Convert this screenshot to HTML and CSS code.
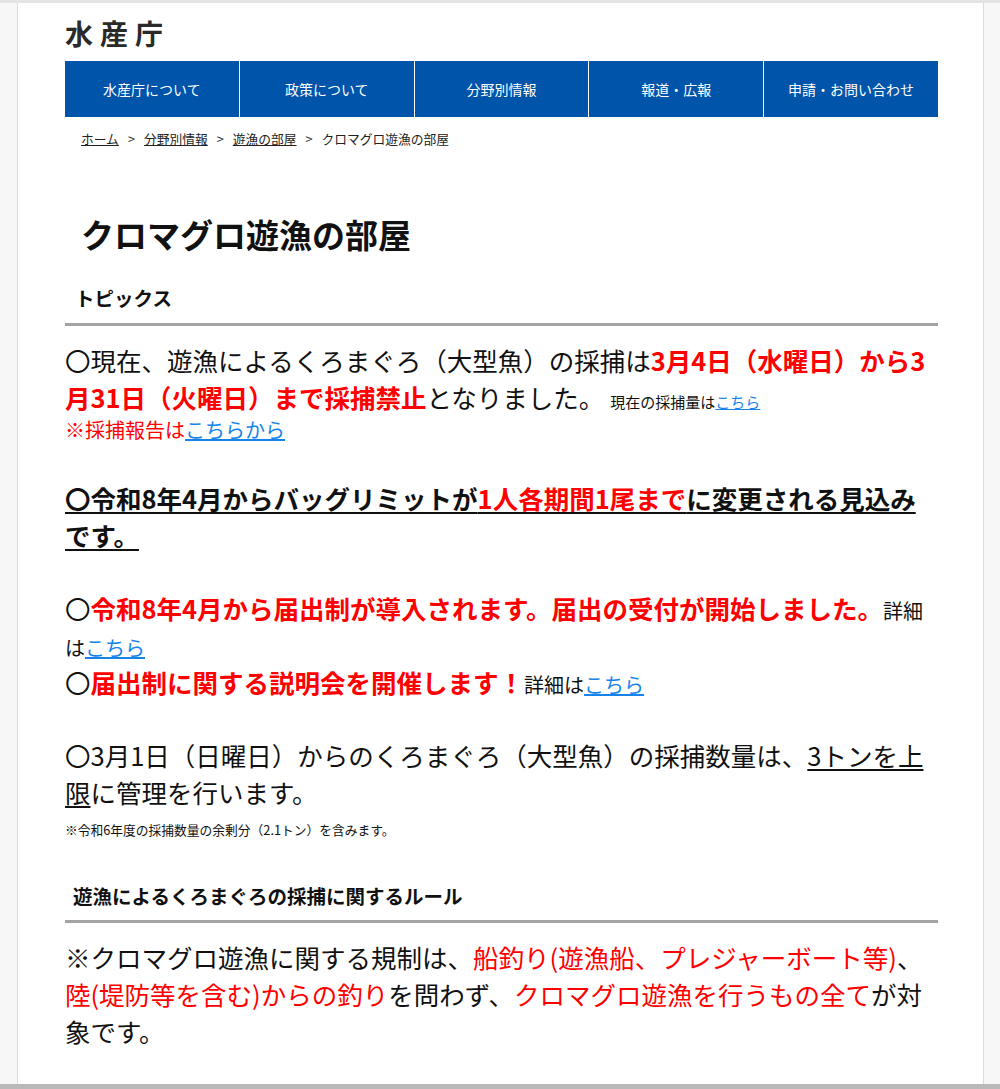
FILE: index.html
```html
<!DOCTYPE html>
<html lang="ja">
<head>
    <meta charset="UTF-8">
    <meta name="viewport" content="width=device-width, initial-scale=1.0">
    <title>クロマグロ遊漁の部屋｜水産庁</title>
    <link rel="stylesheet" href="styles.css">
</head>
<body>

    <div class="sheet">
        <div class="wrap">

            <header class="site-header">
                <div class="logo">水産庁</div>
                <nav class="gnav">
                    <a href="#">水産庁について</a>
                    <a href="#">政策について</a>
                    <a href="#">分野別情報</a>
                    <a href="#">報道・広報</a>
                    <a href="#">申請・お問い合わせ</a>
                </nav>
            </header>

            <div class="breadcrumb">
                <a href="#">ホーム</a><span class="sep">&gt;</span><a href="#">分野別情報</a><span class="sep">&gt;</span><a href="#">遊漁の部屋</a><span class="sep">&gt;</span>クロマグロ遊漁の部屋
            </div>

            <h1 class="page-title">クロマグロ遊漁の部屋</h1>

            <h2 class="section-title">トピックス</h2>

            <p class="topic">〇現在、遊漁によるくろまぐろ（大型魚）の採捕は<strong class="red">3月4日（水曜日）から3月31日（火曜日）まで採捕禁止</strong>となりました。<span class="small">現在の採捕量は<a href="#">こちら</a></span></p>
            <p class="report">※採捕報告は<a href="#">こちらから</a></p>

            <p class="topic bold under">〇令和8年4月からバッグリミットが<span class="red">1人各期間1尾まで</span>に変更される見込みです。</p>

            <p class="topic">〇<strong class="red">令和8年4月から届出制が導入されます。届出の受付が開始しました。</strong><span class="mid">詳細は<a href="#">こちら</a></span><br>〇<strong class="red">届出制に関する説明会を開催します！</strong><span class="mid">詳細は<a href="#">こちら</a></span></p>

            <p class="topic">〇3月1日（日曜日）からのくろまぐろ（大型魚）の採捕数量は、<span class="under">3トンを上限</span>に管理を行います。</p>
            <p class="footnote">※令和6年度の採捕数量の余剰分（2.1トン）を含みます。</p>

            <h2 class="section-title rules">遊漁によるくろまぐろの採捕に関するルール</h2>

            <p class="topic rule-text">※クロマグロ遊漁に関する規制は、<span class="red">船釣り(遊漁船、プレジャーボート等)</span>、<span class="red">陸(堤防等を含む)からの釣り</span>を問わず、<span class="red">クロマグロ遊漁を行うもの全て</span>が対象です。</p>

        </div>
    </div>

</body>
</html>
```

FILE: styles.css
```css
html, body {
    margin: 0;
    padding: 0;
}
body {
    font-family: "Noto Sans CJK JP", "Noto Sans", sans-serif;
    color: #111;
    background-color: #f7f7f7;
    border-top: 3px solid #e4e4e4;
    border-bottom: 5px solid #b9b9b9;
    height: 1081px;
    overflow: hidden;
}
.sheet {
    margin-left: 17px;
    width: 965px;
    height: 100%;
    background-color: #fff;
    border-left: 1px solid #dcdcdc;
    border-right: 1px solid #dcdcdc;
}
.wrap {
    padding: 0 45px 0 47px;
}
a {
    color: #1683eb;
}

/* header */
.logo {
    padding-top: 14px;
    font-size: 28px;
    line-height: 32px;
    font-weight: bold;
    letter-spacing: 7px;
    color: #2a2a2a;
}
.gnav {
    display: flex;
    margin-top: 12px;
    background-color: #0054aa;
}
.gnav a {
    flex: 1;
    height: 56px;
    line-height: 56px;
    text-align: center;
    color: #fff;
    font-size: 14px;
    text-decoration: none;
    border-left: 1px solid #fff;
}
.gnav a:first-child {
    border-left: none;
}
.breadcrumb {
    margin-top: 13px;
    padding-left: 16px;
    font-size: 12.75px;
    line-height: 18px;
    color: #222;
}
.breadcrumb a {
    color: #222;
}
.breadcrumb .sep {
    margin: 0 9px;
}

/* headings */
.page-title {
    margin: 64px 0 0;
    padding-left: 16px;
    font-size: 33px;
    line-height: 44px;
    font-weight: bold;
}
.section-title {
    margin: 28px 0 0;
    padding: 0 0 11px 10px;
    font-size: 19.5px;
    line-height: 28px;
    font-weight: bold;
    border-bottom: 3px solid #a3a3a3;
}
.section-title.rules {
    margin-top: 43px;
    padding-left: 8px;
    padding-bottom: 10px;
}

/* topics */
.topic {
    margin: 36px 0 0;
    font-size: 25.5px;
    line-height: 37px;
}
.section-title + .topic {
    margin-top: 15px;
}
.rule-text {
    margin-top: 17px;
}
.red {
    color: #f00;
}
.bold {
    font-weight: bold;
}
.under {
    text-decoration: underline;
    text-decoration-thickness: 2px;
    text-underline-offset: 3px;
}
.small {
    font-size: 15px;
    line-height: 1;
    margin-left: 6px;
}
.mid {
    font-size: 20px;
    line-height: 1;
}
.report {
    margin: 0;
    font-size: 20px;
    line-height: 30px;
    color: #f00;
}
.report + .topic {
    margin-top: 34px;
}
.footnote {
    margin: 11px 0 0;
    font-size: 12.75px;
    line-height: 18px;
}
```
